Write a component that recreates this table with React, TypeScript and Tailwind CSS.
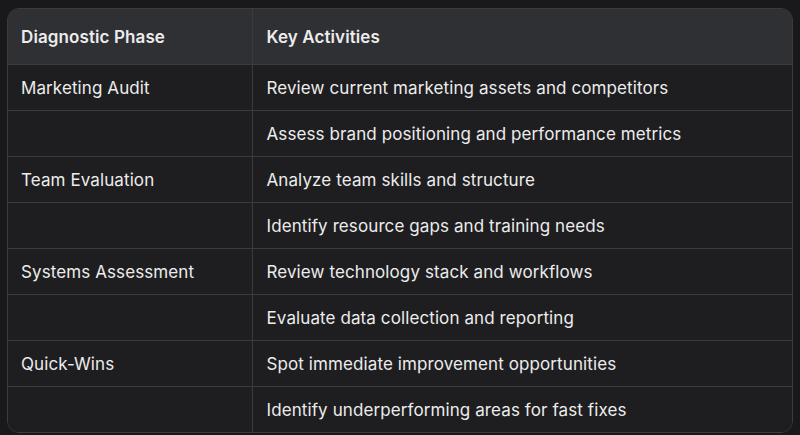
import React from "react";

const rows: [string, string][] = [
  ["Marketing Audit", "Review current marketing assets and competitors"],
  ["", "Assess brand positioning and performance metrics"],
  ["Team Evaluation", "Analyze team skills and structure"],
  ["", "Identify resource gaps and training needs"],
  ["Systems Assessment", "Review technology stack and workflows"],
  ["", "Evaluate data collection and reporting"],
  ["Quick-Wins", "Spot immediate improvement opportunities"],
  ["", "Identify underperforming areas for fast fixes"],
];

export default function App() {
  return (
    <div className="w-[800px] h-[435px] bg-[#19191b] pt-[8px] pl-[7px] font-['Inter',sans-serif] text-[#ececec] text-[17px] tracking-[0.1px]">
      <div className="w-[786px] rounded-[12px] border border-[#3b3b3e] overflow-hidden">
        <table className="w-full border-collapse">
          <thead>
            <tr className="bg-[#2f3034] h-[55px]">
              <th className="w-[244px] text-left font-semibold pl-[13px] pt-[2px] border-r border-b border-[#3b3b3e]">
                Diagnostic Phase
              </th>
              <th className="text-left font-semibold pl-[14px] pt-[2px] border-b border-[#3b3b3e]">
                Key Activities
              </th>
            </tr>
          </thead>
          <tbody className="bg-[#1e1e20]">
            {rows.map(([phase, act], i) => (
              <tr key={i} className="h-[46px]">
                <td
                  className={
                    "pl-[13px] pt-[3px] border-r border-[#3b3b3e] " +
                    (i < rows.length - 1 ? "border-b" : "")
                  }
                >
                  {phase}
                </td>
                <td
                  className={
                    "pl-[14px] pt-[3px] border-[#3b3b3e] " +
                    (i < rows.length - 1 ? "border-b" : "")
                  }
                >
                  {act}
                </td>
              </tr>
            ))}
          </tbody>
        </table>
      </div>
    </div>
  );
}
